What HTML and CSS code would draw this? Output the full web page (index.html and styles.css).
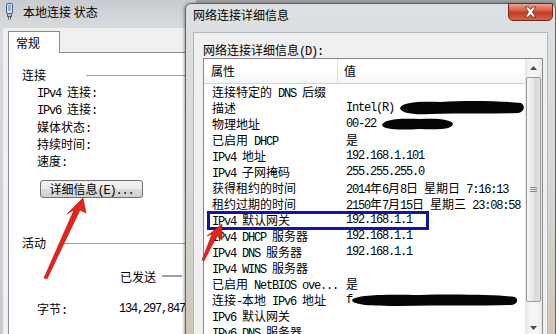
FILE: index.html
```html
<!DOCTYPE html>
<html lang="zh-CN">
<head>
  <meta charset="UTF-8" />
  <title>网络连接详细信息</title>
  <link rel="stylesheet" href="styles.css">
</head>
<body>
  <div class="desk">

    <!-- 后面的窗口：本地连接 状态 -->
    <div class="win back">
      <div class="titlebar">
        <svg class="ico" width="9" height="17" viewBox="0 0 9 17">
          <rect x="1.5" y="0.5" width="6" height="10" rx="1.5" fill="#d7e3ee" stroke="#55606c"/>
          <rect x="3" y="2" width="3" height="6" fill="#8fb3d6"/>
          <rect x="2.5" y="10.5" width="4" height="3" fill="#b8bec6" stroke="#55606c"/>
          <path d="M3.5 13.5v3M5.5 13.5v3" stroke="#55606c"/>
        </svg>
        <span>本地连接 状态</span>
      </div>
      <div class="client">
        <div class="tab">常规</div>
        <div class="panel">
          <div class="group"><span>连接</span><i class="rule"></i></div>
          <div class="fields">
            <div><span class="m">IPv4 </span>连接<span class="m">:</span></div>
            <div><span class="m">IPv6 </span>连接<span class="m">:</span></div>
            <div>媒体状态<span class="m">:</span></div>
            <div>持续时间<span class="m">:</span></div>
            <div>速度<span class="m">:</span></div>
          </div>
          <button class="btn">详细信息<span class="m">(E)...</span></button>
          <div class="group act"><span>活动</span><i class="rule"></i></div>
          <div class="sent"><span>已发送</span><i class="dash"></i></div>
          <div class="bytes"><span class="lbl">字节<span class="m">:</span></span><span class="m">134,297,847</span></div>
        </div>
      </div>
    </div>

    <!-- 前面的窗口：网络连接详细信息 -->
    <div class="win front">
      <div class="titlebar">网络连接详细信息</div>
      <div class="close">
        <svg width="17" height="12" viewBox="0 0 17 12">
          <path d="M3 1h3.5l2 2.6 2-2.6h3.5l-3.6 5 3.6 5h-3.5l-2-2.6-2 2.6h-3.5l3.6-5z" fill="#fff" stroke="#5a2118" stroke-width="0.8"/>
        </svg>
      </div>
      <div class="client">
        <div class="label">网络连接详细信息<span class="m">(D):</span></div>
        <div class="listbox">
          <div class="lv">
            <div class="head">
              <div class="h1">属性</div>
              <div class="h2">值</div>
            </div>
            <div class="row"><span class="k">连接特定的<span class="m"> DNS </span>后缀</span><span class="v"></span></div>
            <div class="row"><span class="k">描述</span><span class="v m">Intel(R)</span></div>
            <div class="row"><span class="k">物理地址</span><span class="v m">00-22</span></div>
            <div class="row"><span class="k">已启用<span class="m"> DHCP</span></span><span class="v">是</span></div>
            <div class="row"><span class="k"><span class="m">IPv4 </span>地址</span><span class="v m">192.168.1.101</span></div>
            <div class="row"><span class="k"><span class="m">IPv4 </span>子网掩码</span><span class="v m">255.255.255.0</span></div>
            <div class="row"><span class="k">获得租约的时间</span><span class="v"><span class="m">2014</span>年<span class="m">6</span>月<span class="m">8</span>日<span class="m"> </span>星期日<span class="m"> 7:16:13</span></span></div>
            <div class="row"><span class="k">租约过期的时间</span><span class="v"><span class="m">2150</span>年<span class="m">7</span>月<span class="m">15</span>日<span class="m"> </span>星期三<span class="m"> 23:08:58</span></span></div>
            <div class="row"><span class="k"><span class="m">IPv4 </span>默认网关</span><span class="v m">192.168.1.1</span></div>
            <div class="row"><span class="k"><span class="m">IPv4 DHCP </span>服务器</span><span class="v m">192.168.1.1</span></div>
            <div class="row"><span class="k"><span class="m">IPv4 DNS </span>服务器</span><span class="v m">192.168.1.1</span></div>
            <div class="row"><span class="k"><span class="m">IPv4 WINS </span>服务器</span><span class="v"></span></div>
            <div class="row"><span class="k">已启用<span class="m"> NetBIOS ove...</span></span><span class="v">是</span></div>
            <div class="row"><span class="k">连接<span class="m">-</span>本地<span class="m"> IPv6 </span>地址</span><span class="v m">f</span></div>
            <div class="row"><span class="k"><span class="m">IPv6 </span>默认网关</span><span class="v"></span></div>
            <div class="row"><span class="k"><span class="m">IPv6 DNS </span>服务器</span><span class="v"></span></div>
          </div>
          <div class="sb">
            <div class="arr">
              <svg width="7" height="4" viewBox="0 0 7 4"><path d="M0 4L3.5 0 7 4z" fill="#4a4a4a"/></svg>
            </div>
            <div class="thumb">
              <svg width="7" height="5" viewBox="0 0 7 5"><path d="M0 .5h7M0 2.5h7M0 4.5h7" stroke="#8a8a8a"/></svg>
            </div>
            <div class="sp"></div>
            <div class="arr">
              <svg width="7" height="4" viewBox="0 0 7 4"><path d="M0 0L3.5 4 7 0z" fill="#4a4a4a"/></svg>
            </div>
          </div>
        </div>
      </div>
    </div>

    <!-- 标注：涂黑、蓝框、红箭头 -->
    <svg class="marks" viewBox="0 0 556 334">
      <path d="M400 108C402 102 420 101 440 102C470 100 500 101 521 103C526 106 524 112 518 113C490 114 460 113 430 114C412 115 401 113 400 108Z" fill="#050505"/>
      <path d="M382 125C384 119 400 118 420 119C440 118 452 120 453 124C452 129 440 130 420 129C400 130 384 130 382 125Z" fill="#050505"/>
      <path d="M352 300C355 295 380 294 420 295C460 294 500 295 515 297C519 300 517 304 512 305C480 306 440 305 400 306C370 306 353 305 352 300Z" fill="#050505"/>
      <rect x="208.5" y="212.5" width="219" height="16" fill="none" stroke="#15159a" stroke-width="3"/>
      <polygon points="83,198 86,213 80,210 47,279 44,278 74,210 67,214" fill="#e3231c" stroke="#b01512" stroke-width="0.6"/>
      <polygon points="222,224 222,240 217,236 204,261 202,260 212,234 207,236" fill="#e3231c" stroke="#b01512" stroke-width="0.6"/>
    </svg>
  </div>
</body>
</html>
```

FILE: styles.css
```css
* { box-sizing: border-box; }
html, body {
  margin: 0;
  padding: 0;
}
body {
  width: 556px;
  height: 334px;
  overflow: hidden;
  background: #9d9fa1;
  font-family: "Noto Sans CJK SC", sans-serif;
  font-size: 12px;
  color: #000;
}
.desk {
  position: relative;
  width: 556px;
  height: 334px;
  overflow: hidden;
}
.m {
  font-family: "Liberation Mono", monospace;
  letter-spacing: -1.2px;
}

/* 窗口 */
.win { position: absolute; }
.back {
  left: 0;
  top: 0;
  width: 196px;
  height: 334px;
  background: linear-gradient(#c8ccd0, #d8dbde 28px, #c9ccce);
}
.back .titlebar {
  height: 28px;
  display: flex;
  align-items: flex-start;
  gap: 9px;
  padding: 3px 0 0 5px;
  line-height: 16px;
}
.back .titlebar span { margin-top: 1px; }
.back .client {
  margin-left: 3px;
  height: 306px;
  background: #f0f0f0;
  padding: 3px 0 0 5px;
}
.tab {
  position: relative;
  z-index: 1;
  width: 52px;
  height: 22px;
  margin-bottom: -1px;
  padding-left: 7px;
  line-height: 21px;
  background: #fff;
  border: 1px solid #898c95;
  border-bottom: 0;
}
.panel {
  height: 290px;
  padding-top: 14px;
  background: #fff;
  border: 1px solid #898c95;
  border-right: 0;
}
.group {
  display: flex;
  align-items: center;
  height: 16px;
  line-height: 16px;
  padding-left: 13px;
}
.group .rule {
  flex: 1;
  height: 1px;
  margin-left: 40px;
  background: #a0a0a0;
}
.group.act { margin-top: 37px; }
.group.act .rule { margin-left: 18px; }
.fields {
  padding-left: 28px;
}
.fields div {
  height: 17.25px;
  line-height: 17px;
}
.btn {
  display: block;
  width: 103px;
  height: 18px;
  margin: 11px 0 0 31px;
  padding: 0;
  font: inherit;
  line-height: 16px;
  color: #000;
  border: 1px solid #707070;
  border-radius: 3px;
  background: linear-gradient(#f2f2f2, #ebebeb 50%, #dddddd 51%, #cfcfcf);
}
.sent {
  display: flex;
  align-items: center;
  height: 16px;
  margin-top: 17px;
  padding-left: 111px;
}
.sent .dash {
  width: 20px;
  height: 2px;
  margin-left: 6px;
  background: #a0a0a0;
}
.bytes {
  display: flex;
  height: 16px;
  line-height: 16px;
  margin-top: 17px;
  padding-left: 28px;
}
.bytes .lbl { width: 82px; }

.front {
  left: 185px;
  top: 3px;
  width: 371px;
  height: 340px;
  border: 1px solid #5f6366;
  border-radius: 6px 6px 0 0;
  background: linear-gradient(#dde0e3, #d6d7d6 55%, #cdc6b5);
  box-shadow: -1px 0 3px rgba(0, 0, 0, .35);
}
.front .titlebar {
  height: 28px;
  padding: 3px 0 0 7px;
  line-height: 16px;
}
.close {
  position: absolute;
  top: -1px;
  left: 322px;
  width: 45px;
  height: 18px;
  display: flex;
  align-items: center;
  justify-content: center;
  border: 1px solid #6b2a1e;
  border-radius: 0 0 5px 5px;
  background: linear-gradient(#e9a493, #d6553c 45%, #c43a20 55%, #d8654a);
}
.front .client {
  margin: 0 7px;
  height: 310px;
  padding: 9px 0 0 9px;
  background: #f0f0f0;
  border: 1px solid #b4b8bc;
  border-bottom: 0;
}
.label {
  height: 16px;
  line-height: 16px;
}
.listbox {
  display: flex;
  width: 340px;
  height: 279px;
  background: #fff;
  border: 1px solid #828790;
}
.lv {
  width: 321px;
  overflow: hidden;
}
.head {
  display: flex;
  height: 25px;
  line-height: 23px;
  border-bottom: 1px solid #d5d5d5;
  background: linear-gradient(#fff 50%, #f4f5f7);
}
.head .h1 {
  width: 134px;
  padding-left: 7px;
  border-right: 1px solid #e3e3e3;
}
.head .h2 { padding-left: 6px; }
.row {
  display: flex;
  height: 16px;
  line-height: 16px;
  white-space: nowrap;
}
.row .k {
  flex: none;
  width: 134px;
  padding-left: 8px;
}
.row .v { padding-left: 8px; }

.sb {
  width: 17px;
  display: flex;
  flex-direction: column;
  background: linear-gradient(90deg, #e4e4e4, #f5f5f5 30%, #f5f5f5 70%, #e9e9e9);
}
.sb .arr {
  height: 17px;
  display: flex;
  align-items: center;
  justify-content: center;
}
.sb .thumb {
  height: 225px;
  margin: 1px 1px 0;
  display: flex;
  align-items: center;
  justify-content: center;
  border: 1px solid #9a9a9a;
  border-radius: 2px;
  background: linear-gradient(90deg, #f4f4f4, #e8e8e8 50%, #d8d8d8 51%, #e0e0e0);
}
.sb .sp { flex: 1; }

.marks {
  position: absolute;
  left: 0;
  top: 0;
  width: 556px;
  height: 334px;
  pointer-events: none;
}
```
